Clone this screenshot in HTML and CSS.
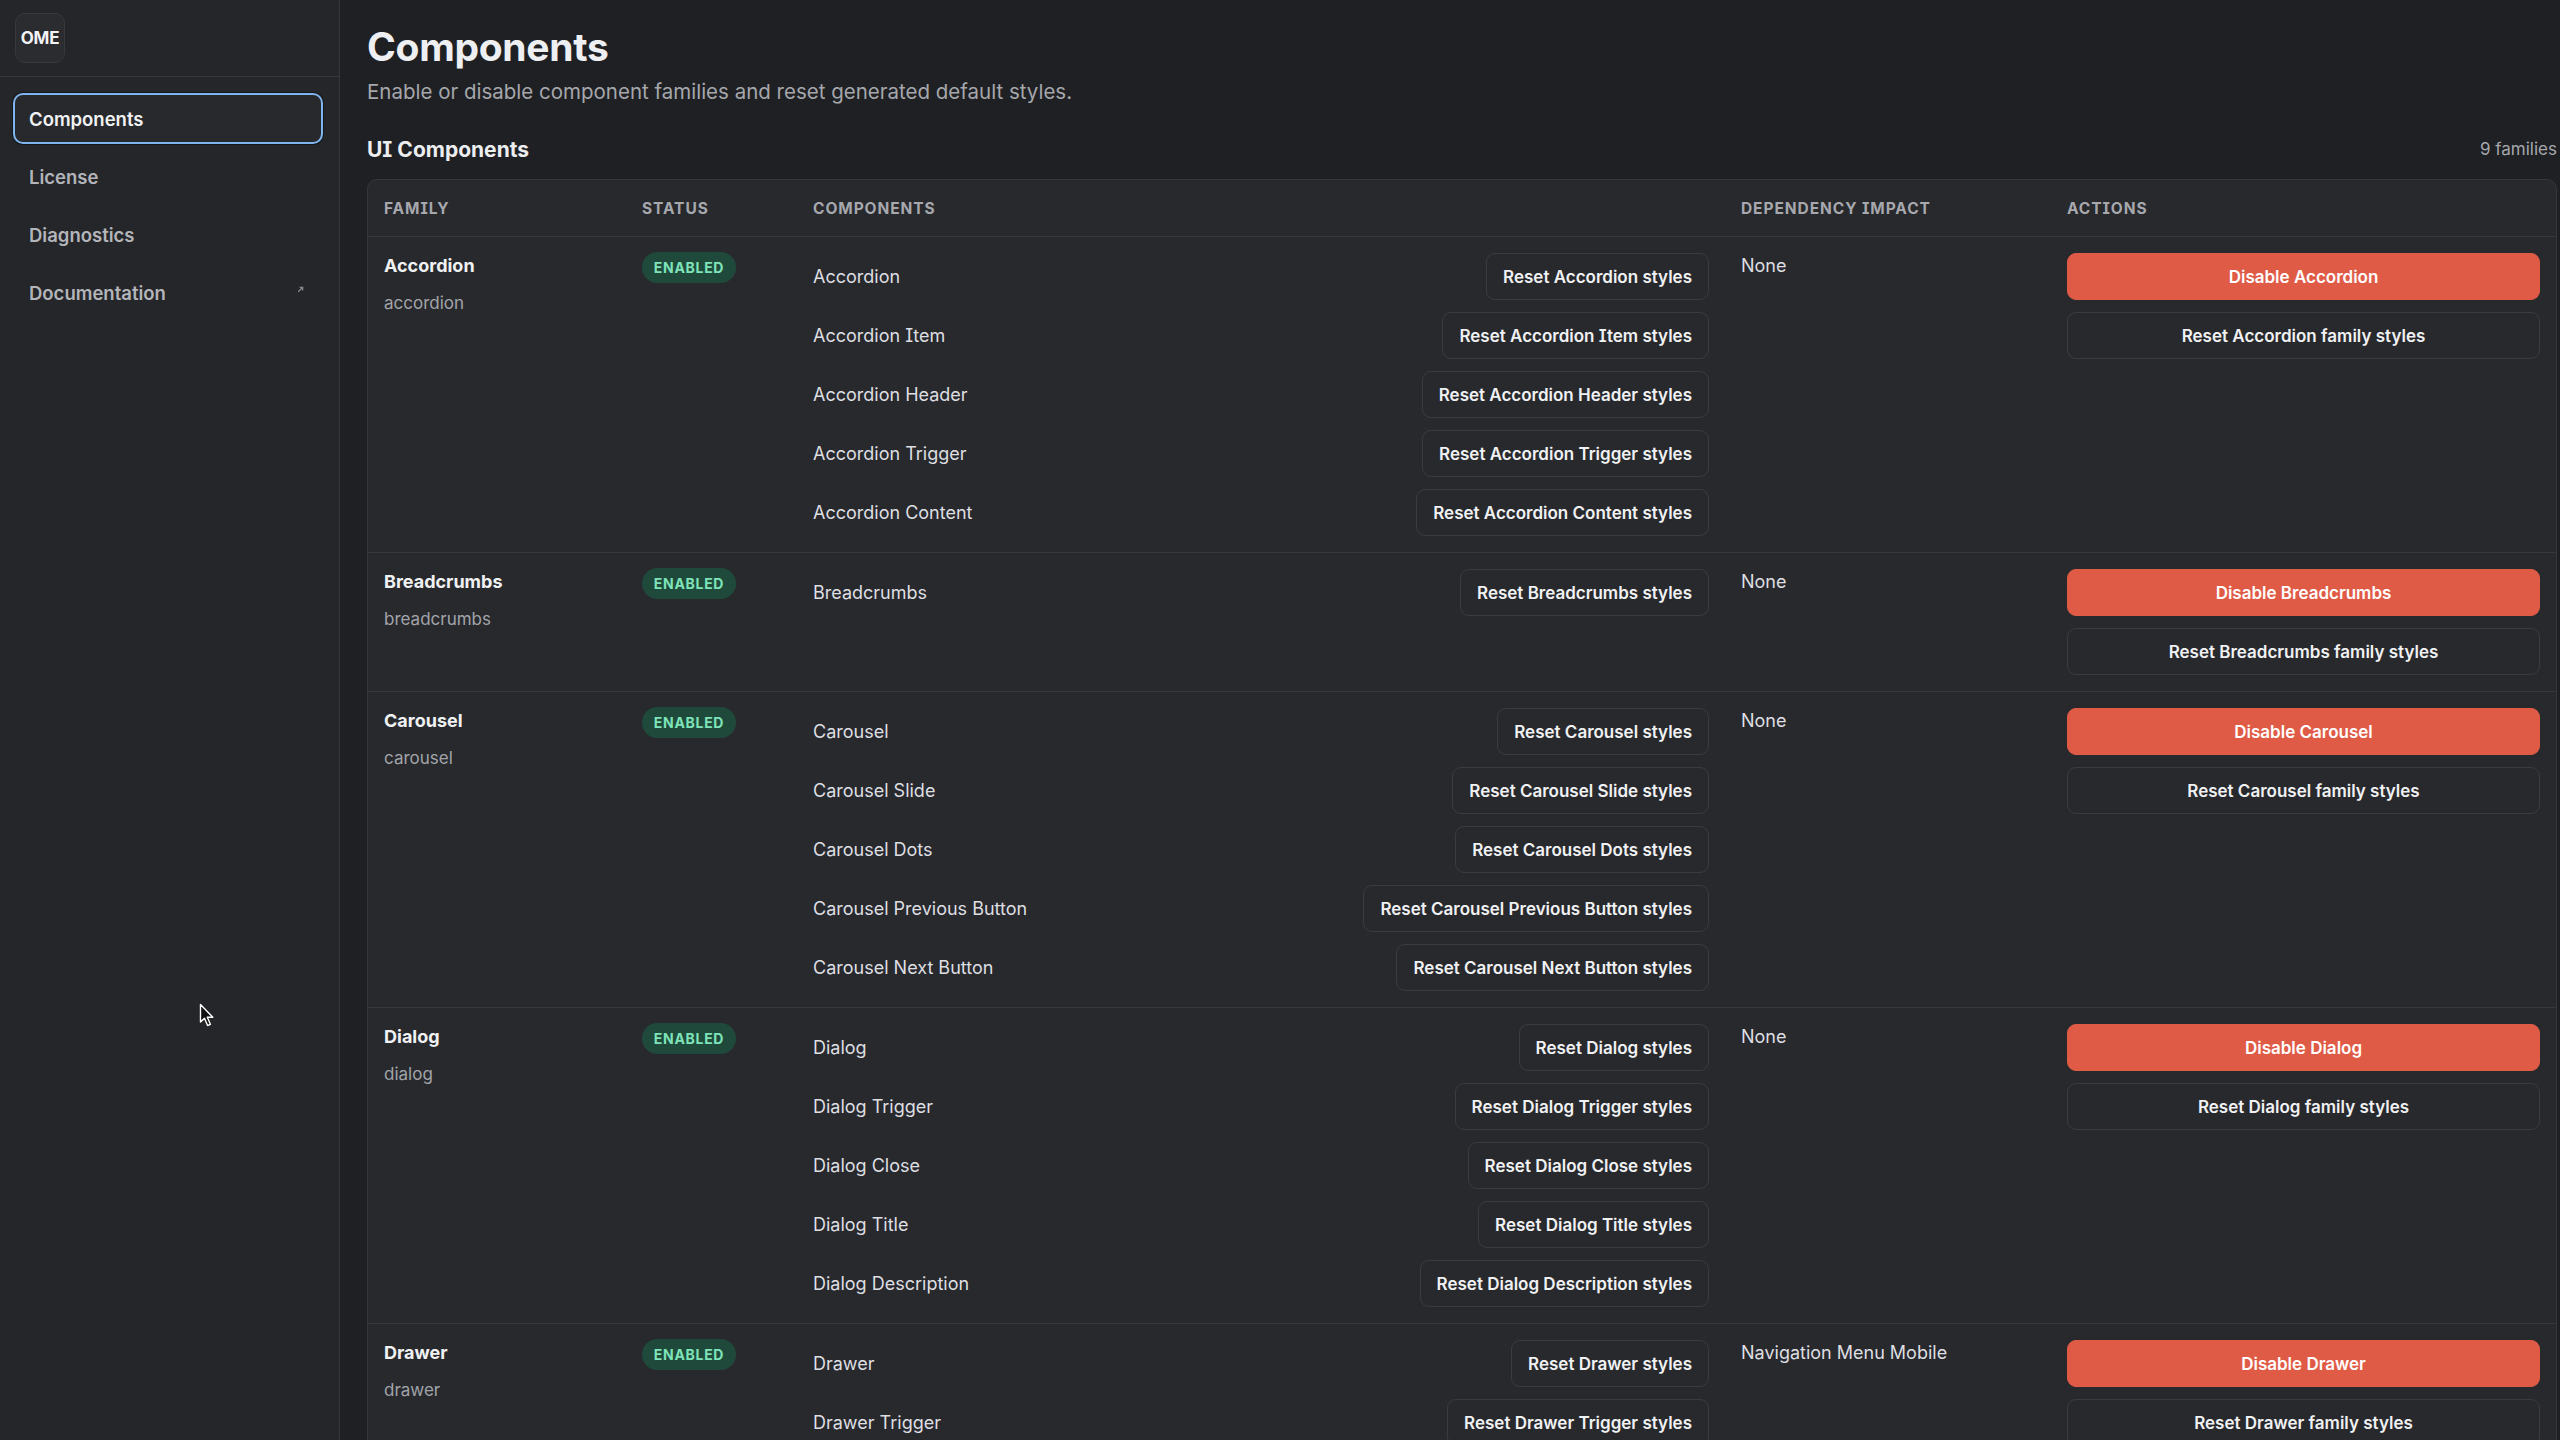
FILE: index.html
```html
<!DOCTYPE html>
<html lang="en">
<head>
<meta charset="utf-8">
<title>Components</title>
<link rel="stylesheet" href="styles.css">
</head>
<body>
<div class="app">
  <aside class="sidebar">
    <div class="brand"><div class="logo">OME</div></div>
    <nav class="nav">
      <a class="nav-item active">Components</a>
      <a class="nav-item">License</a>
      <a class="nav-item">Diagnostics</a>
      <a class="nav-item">Documentation <svg class="ext" viewBox="0 0 10 10" width="9" height="9"><path d="M2.5 7.5 L7.5 2.5 M3.8 2.5 H7.5 V6.2" fill="none" stroke="currentColor" stroke-width="1.2"/></svg></a>
    </nav>
  </aside>
  <main class="main">
    <h1 class="title">Components</h1>
    <p class="subtitle">Enable or disable component families and reset generated default styles.</p>
    <div class="section-head">
      <h2 class="section-title">UI Components</h2>
      <span class="count">9 families</span>
    </div>
    <div class="table">
      <div class="row thead">
        <div class="cell">Family</div>
        <div class="cell">Status</div>
        <div class="cell">Components</div>
        <div class="cell">Dependency Impact</div>
        <div class="cell">Actions</div>
      </div>

      <div class="row">
        <div class="cell family"><div class="fam-name">Accordion</div><div class="fam-slug">accordion</div></div>
        <div class="cell"><span class="badge">ENABLED</span></div>
        <div class="cell comps">
          <div class="comp"><span>Accordion</span><button class="btn">Reset Accordion styles</button></div>
          <div class="comp"><span>Accordion Item</span><button class="btn">Reset Accordion Item styles</button></div>
          <div class="comp"><span>Accordion Header</span><button class="btn">Reset Accordion Header styles</button></div>
          <div class="comp"><span>Accordion Trigger</span><button class="btn">Reset Accordion Trigger styles</button></div>
          <div class="comp"><span>Accordion Content</span><button class="btn">Reset Accordion Content styles</button></div>
        </div>
        <div class="cell dep">None</div>
        <div class="cell actions"><button class="btn danger">Disable Accordion</button><button class="btn">Reset Accordion family styles</button></div>
      </div>

      <div class="row">
        <div class="cell family"><div class="fam-name">Breadcrumbs</div><div class="fam-slug">breadcrumbs</div></div>
        <div class="cell"><span class="badge">ENABLED</span></div>
        <div class="cell comps">
          <div class="comp"><span>Breadcrumbs</span><button class="btn">Reset Breadcrumbs styles</button></div>
        </div>
        <div class="cell dep">None</div>
        <div class="cell actions"><button class="btn danger">Disable Breadcrumbs</button><button class="btn">Reset Breadcrumbs family styles</button></div>
      </div>

      <div class="row">
        <div class="cell family"><div class="fam-name">Carousel</div><div class="fam-slug">carousel</div></div>
        <div class="cell"><span class="badge">ENABLED</span></div>
        <div class="cell comps">
          <div class="comp"><span>Carousel</span><button class="btn">Reset Carousel styles</button></div>
          <div class="comp"><span>Carousel Slide</span><button class="btn">Reset Carousel Slide styles</button></div>
          <div class="comp"><span>Carousel Dots</span><button class="btn">Reset Carousel Dots styles</button></div>
          <div class="comp"><span>Carousel Previous Button</span><button class="btn">Reset Carousel Previous Button styles</button></div>
          <div class="comp"><span>Carousel Next Button</span><button class="btn">Reset Carousel Next Button styles</button></div>
        </div>
        <div class="cell dep">None</div>
        <div class="cell actions"><button class="btn danger">Disable Carousel</button><button class="btn">Reset Carousel family styles</button></div>
      </div>

      <div class="row">
        <div class="cell family"><div class="fam-name">Dialog</div><div class="fam-slug">dialog</div></div>
        <div class="cell"><span class="badge">ENABLED</span></div>
        <div class="cell comps">
          <div class="comp"><span>Dialog</span><button class="btn">Reset Dialog styles</button></div>
          <div class="comp"><span>Dialog Trigger</span><button class="btn">Reset Dialog Trigger styles</button></div>
          <div class="comp"><span>Dialog Close</span><button class="btn">Reset Dialog Close styles</button></div>
          <div class="comp"><span>Dialog Title</span><button class="btn">Reset Dialog Title styles</button></div>
          <div class="comp"><span>Dialog Description</span><button class="btn">Reset Dialog Description styles</button></div>
        </div>
        <div class="cell dep">None</div>
        <div class="cell actions"><button class="btn danger">Disable Dialog</button><button class="btn">Reset Dialog family styles</button></div>
      </div>

      <div class="row">
        <div class="cell family"><div class="fam-name">Drawer</div><div class="fam-slug">drawer</div></div>
        <div class="cell"><span class="badge">ENABLED</span></div>
        <div class="cell comps">
          <div class="comp"><span>Drawer</span><button class="btn">Reset Drawer styles</button></div>
          <div class="comp"><span>Drawer Trigger</span><button class="btn">Reset Drawer Trigger styles</button></div>
          <div class="comp"><span>Drawer Content</span><button class="btn">Reset Drawer Content styles</button></div>
          <div class="comp"><span>Drawer Close</span><button class="btn">Reset Drawer Close styles</button></div>
        </div>
        <div class="cell dep">Navigation Menu Mobile</div>
        <div class="cell actions"><button class="btn danger">Disable Drawer</button><button class="btn">Reset Drawer family styles</button></div>
      </div>
    </div>
  </main>
</div>
<svg class="cursor" viewBox="0 0 16 25" width="16" height="25"><path d="M1.5 1.5 L1.5 19 L5.5 15.2 L8.6 22.5 L11.4 21.3 L8.3 14.2 L13.8 14.2 Z" fill="#111" stroke="#fff" stroke-width="1.4" stroke-linejoin="round"/></svg>
</body>
</html>
```
FILE: styles.css
```css
* { box-sizing: border-box; }
html, body {
  margin: 0;
  padding: 0;
  height: 100%;
  overflow: hidden;
  background: #1f2023;
}
body {
  font-family: "Inter", "Noto Sans", sans-serif;
  font-feature-settings: "cv08";
  color: #e6e7ea;
}
.app {
  display: flex;
  height: 100vh;
}
.sidebar {
  width: 340px;
  flex: none;
  background: #252629;
  border-right: 1px solid #36373b;
}
.brand {
  height: 77px;
  border-bottom: 1px solid #36373b;
  display: flex;
  align-items: center;
  padding-left: 15px;
}
.logo {
  width: 50px;
  height: 50px;
  border-radius: 10px;
  border: 1px solid #38393e;
  background: #2b2c30;
  display: flex;
  align-items: center;
  justify-content: center;
  font-weight: 700;
  font-size: 17px;
  color: #f2f3f5;
  letter-spacing: -0.3px;
}
.nav {
  display: flex;
  flex-direction: column;
  gap: 7px;
  padding: 16px 16px 0 13px;
}
.nav-item {
  height: 51px;
  display: flex;
  align-items: center;
  justify-content: space-between;
  padding: 0 16px 0 14px;
  border: 2px solid transparent;
  border-radius: 10px;
  font-size: 18.5px;
  font-weight: 600;
  color: #b3b5ba;
}
.nav-item.active {
  border-color: #80b4ee;
  background: #28292d;
  color: #f1f2f4;
  box-shadow: 0 0 0 1px #151618;
}
.ext {
  color: #8d8f94;
  margin-top: -6px;
}
.main {
  flex: 1;
  min-width: 0;
  padding: 23px 3px 0 27px;
  overflow: hidden;
}
.title {
  margin: 0;
  font-size: 39px;
  line-height: 47px;
  font-weight: 700;
  color: #eeeff2;
  letter-spacing: -0.3px;
}
.subtitle {
  margin: 8px 0 0;
  font-size: 20.5px;
  line-height: 28px;
  color: #a5a7ac;
}
.section-head {
  margin-top: 29px;
  display: flex;
  align-items: center;
  justify-content: space-between;
  height: 28px;
}
.section-title {
  margin: 0;
  font-size: 21px;
  font-weight: 700;
  color: #eceef0;
}
.count {
  font-size: 17px;
  color: #a5a7ac;
}
.table {
  margin-top: 16px;
  border: 1px solid #36373b;
  border-radius: 10px;
  background: #28292d;
}
.row {
  display: grid;
  grid-template-columns: 258px 171px 928px 326px 1fr;
  border-bottom: 1px solid #37383c;
}
.cell {
  padding: 16px;
}
.thead .cell {
  height: 56px;
  padding-top: 0;
  padding-bottom: 0;
  display: flex;
  align-items: center;
  font-size: 15.5px;
  font-weight: 700;
  letter-spacing: 0.06em;
  text-transform: uppercase;
  color: #a6a8ad;
}
.fam-name {
  font-size: 18px;
  line-height: 26px;
  font-weight: 700;
  color: #f0f1f3;
}
.fam-slug {
  margin-top: 11px;
  font-size: 17px;
  line-height: 26px;
  color: #a2a4a9;
}
.badge {
  display: inline-flex;
  align-items: center;
  justify-content: center;
  margin-top: -1px;
  width: 94px;
  height: 31px;
  border-radius: 16px;
  background: #1f4a3b;
  color: #7ee3b9;
  font-size: 14px;
  font-weight: 700;
  letter-spacing: 0.05em;
}
.comps {
  display: flex;
  flex-direction: column;
  gap: 12px;
}
.comp {
  display: flex;
  align-items: center;
  justify-content: space-between;
  font-size: 18px;
  color: #dedfe2;
}
.dep {
  font-size: 18px;
  line-height: 26px;
  color: #dedfe2;
}
.actions {
  display: flex;
  flex-direction: column;
  gap: 12px;
}
.btn {
  font-family: inherit;
  font-feature-settings: "cv08";
  height: 47px;
  padding: 0 16px;
  border: 1px solid #3b3c41;
  border-radius: 9px;
  background: #28292d;
  color: #f0f1f3;
  font-size: 17px;
  font-weight: 600;
}
.actions .btn {
  width: 100%;
}
.btn.danger {
  background: #e05b46;
  border-color: #e05b46;
  color: #ffffff;
}
.cursor {
  position: absolute;
  left: 199px;
  top: 1003px;
}
```
